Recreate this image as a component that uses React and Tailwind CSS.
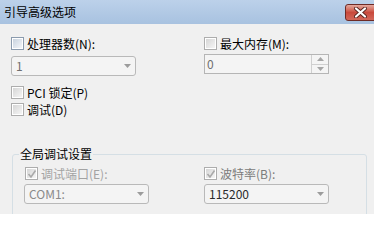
import React from 'react';

const Check = ({ active, checked }) => (
  <span
    className={`relative flex h-[13px] w-[13px] shrink-0 items-center justify-center border bg-white ${
      active ? 'border-[#8b9bae]' : 'border-[#adadad]'
    }`}
  >
    <span
      className={`h-[9px] w-[9px] bg-gradient-to-br ${
        active ? 'from-[#c9d3df] to-[#f4f6f9]' : 'from-[#d6d6d6] to-[#f5f5f5]'
      }`}
    />
    {checked && (
      <svg className="absolute left-[1px] top-[1px]" width="10" height="10" viewBox="0 0 10 10">
        <path d="M1.5 5 L4 8 L8.5 1.5" fill="none" stroke="#a9a9a9" strokeWidth="1.6" />
      </svg>
    )}
  </span>
);

const CheckRow = ({ label, active, checked, muted, className = '' }) => (
  <div className={`flex h-[13px] items-center gap-[3px] ${className}`}>
    <Check active={active} checked={checked} />
    <span className={`whitespace-nowrap text-[12px] leading-[14px] ${muted || 'text-black'}`}>{label}</span>
  </div>
);

const Combo = ({ value, textColor, className = '' }) => (
  <div
    className={`flex h-[20px] w-[125px] items-center justify-between rounded-[3px] border border-[#b9b9b9] bg-[#f4f4f4] pl-[4px] pr-[4px] ${className}`}
  >
    <span className={`text-[12px] leading-[14px] ${textColor}`}>{value}</span>
    <svg width="7" height="4" viewBox="0 0 7 4">
      <path d="M0 0 H7 L3.5 4 Z" fill="#9c9c9c" />
    </svg>
  </div>
);

export default function App() {
  return (
    <div className="h-[214px] w-[374px] overflow-hidden bg-[#f0f0f0] font-['Noto_Sans_CJK_SC','Noto_Sans',sans-serif]">
      <div className="flex h-[24px] items-start justify-between bg-gradient-to-b from-[#bcd1ea] to-[#a8c2e0]">
        <span className="pl-[4px] pt-[5px] text-[12px] leading-[14px] text-black">引导高级选项</span>
        <div className="mr-[-14px] mt-[4px] flex h-[17px] w-[43px] shrink-0 items-center rounded-[3px] border border-[#6e2b26] bg-gradient-to-b from-[#e3a99f] via-[#c9493c] to-[#d2675a] pl-[8px]">
          <svg width="13" height="11" viewBox="0 0 13 11">
            <path d="M2 1.5 L11 9.5 M11 1.5 L2 9.5" stroke="#5a2420" strokeWidth="4" strokeLinecap="round" />
            <path d="M2 1.5 L11 9.5 M11 1.5 L2 9.5" stroke="#ffffff" strokeWidth="2.2" strokeLinecap="round" />
          </svg>
        </div>
      </div>

      <div className="grid grid-cols-[193px_1fr] pl-[11px] pt-[13px]">
        <div className="flex flex-col">
          <CheckRow label="处理器数(N):" active />
          <Combo value="1" textColor="text-[#6f6f6f]" className="mt-[6px]" />
          <CheckRow label="PCI 锁定(P)" className="mt-[10px]" />
          <CheckRow label="调试(D)" className="mt-[4px]" />
        </div>
        <div className="flex flex-col">
          <CheckRow label="最大内存(M):" />
          <div className="mt-[4px] flex h-[20px] w-[125px] items-stretch border border-[#b5b5b5] bg-[#f4f4f4]">
            <span className="flex-1 pl-[2px] text-[12px] leading-[18px] text-[#6f6f6f]">0</span>
            <div className="flex w-[17px] flex-col border-l border-[#cfcfcf]">
              <div className="flex flex-1 items-center justify-center border-b border-[#cfcfcf]">
                <svg width="7" height="4" viewBox="0 0 7 4">
                  <path d="M0 4 H7 L3.5 0 Z" fill="#a5a5a5" />
                </svg>
              </div>
              <div className="flex flex-1 items-center justify-center">
                <svg width="7" height="4" viewBox="0 0 7 4">
                  <path d="M0 0 H7 L3.5 4 Z" fill="#a5a5a5" />
                </svg>
              </div>
            </div>
          </div>
        </div>
      </div>

      <fieldset className="ml-[12px] mt-[31px] w-[355px] rounded-[3px] border border-[#d5dfe5] pb-[40px]">
        <legend className="ml-[6px] px-[1px] text-[12px] leading-[14px] text-black">全局调试设置</legend>
        <div className="grid grid-cols-[180px_1fr] pl-[11px] pt-[6px]">
          <div className="flex flex-col">
            <CheckRow label="调试端口(E):" checked muted="text-[#a3a3a3]" className="ml-[1px]" />
            <Combo value="COM1:" textColor="text-[#8a8a8a]" className="mt-[4px]" />
          </div>
          <div className="flex flex-col">
            <CheckRow label="波特率(B):" checked muted="text-[#7c7c7c]" />
            <Combo value="115200" textColor="text-[#2a2a2a]" className="mt-[4px]" />
          </div>
        </div>
      </fieldset>
    </div>
  );
}
